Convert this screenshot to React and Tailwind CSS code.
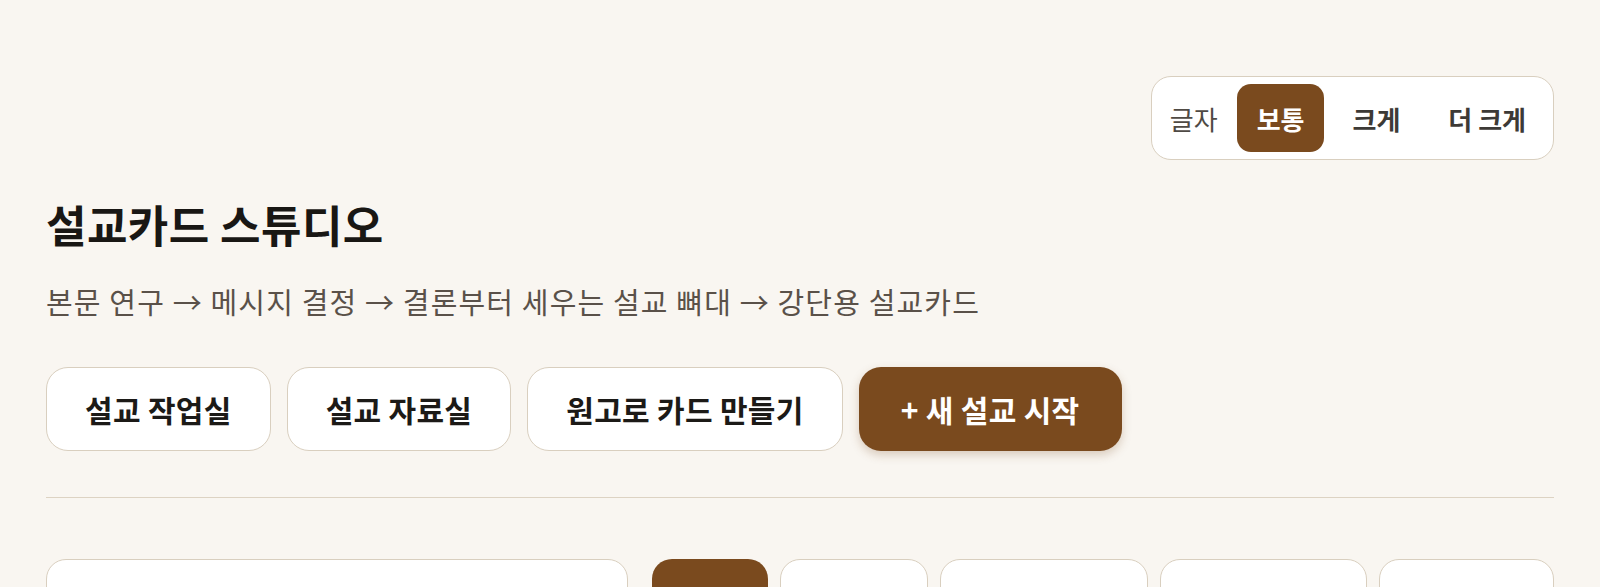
import { useState } from 'react'

const sizes = ['보통', '크게', '더 크게']

const actions = [
  { label: '설교 작업실' },
  { label: '설교 자료실' },
  { label: '원고로 카드 만들기' },
]

// filter chips below the divider (only their tops are in view)
const filters = [
  { key: 'all', w: 'w-[116px]', active: true },
  { key: 'draft', w: 'w-[148px]' },
  { key: 'message', w: 'w-[208px]' },
  { key: 'done', w: 'w-[207px]' },
  { key: 'archive', w: 'w-[175px]' },
]

export default function App() {
  const [size, setSize] = useState('보통')

  return (
    <div className="min-h-screen bg-[#f9f6f1] px-[46px] pt-[76px] font-['Noto_Sans_CJK_KR',sans-serif] text-[#1c1a17]">
      {/* Font size toggle */}
      <div className="flex justify-end">
        <div className="flex items-center gap-2 rounded-[20px] border border-[#d9cfbf] bg-white p-[7px]">
          <span className="px-[11px] text-[26px] text-[#4f4a44]">글자</span>
          {sizes.map((s) => (
            <button
              key={s}
              onClick={() => setSize(s)}
              className={
                size === s
                  ? 'h-[68px] rounded-[14px] bg-[#7a4a1e] px-[20px] text-[26px] font-bold text-white'
                  : 'h-[68px] rounded-[14px] px-[20px] text-[26px] font-bold text-[#3d3a36]'
              }
            >
              {s}
            </button>
          ))}
        </div>
      </div>

      {/* Title */}
      <div className="border-b border-[#ddd3c3] pb-[46px]">
        <h1 className="mt-[36px] text-[44px] leading-[56px] font-bold tracking-[0.01em] text-[#191714]">
          설교카드 스튜디오
        </h1>
        <p className="mt-[29px] text-[29px] leading-[40px] tracking-[0.04em] text-[#5a5149]">
          본문 연구 → 메시지 결정 → 결론부터 세우는 설교 뼈대 → 강단용 설교카드
        </p>

        <div className="mt-[46px] flex gap-4">
          {actions.map((a) => (
            <button
              key={a.label}
              className="h-[84px] rounded-[22px] border border-[#d9cfbf] bg-white px-[38px] text-[30px] font-bold tracking-[0.01em] text-[#1c1a17]"
            >
              {a.label}
            </button>
          ))}
          <button className="h-[84px] rounded-[22px] bg-[#7a4a1e] px-[42px] text-[30px] font-bold tracking-[0.01em] text-white shadow-[0_4px_10px_rgba(122,74,30,0.25)]">
            + 새 설교 시작
          </button>
        </div>
      </div>

      {/* Search + filters */}
      <div className="mt-[61px] flex items-start">
        <div className="h-[76px] flex-1 rounded-[20px] border border-[#d9cfbf] bg-white" />
        <div className="ml-6 flex gap-3">
          {filters.map((f) => (
            <div
              key={f.key}
              className={
                f.active
                  ? `h-[76px] ${f.w} rounded-[20px] bg-[#7a4a1e]`
                  : `h-[76px] ${f.w} rounded-[20px] border border-[#d9cfbf] bg-white`
              }
            />
          ))}
        </div>
      </div>
    </div>
  )
}
